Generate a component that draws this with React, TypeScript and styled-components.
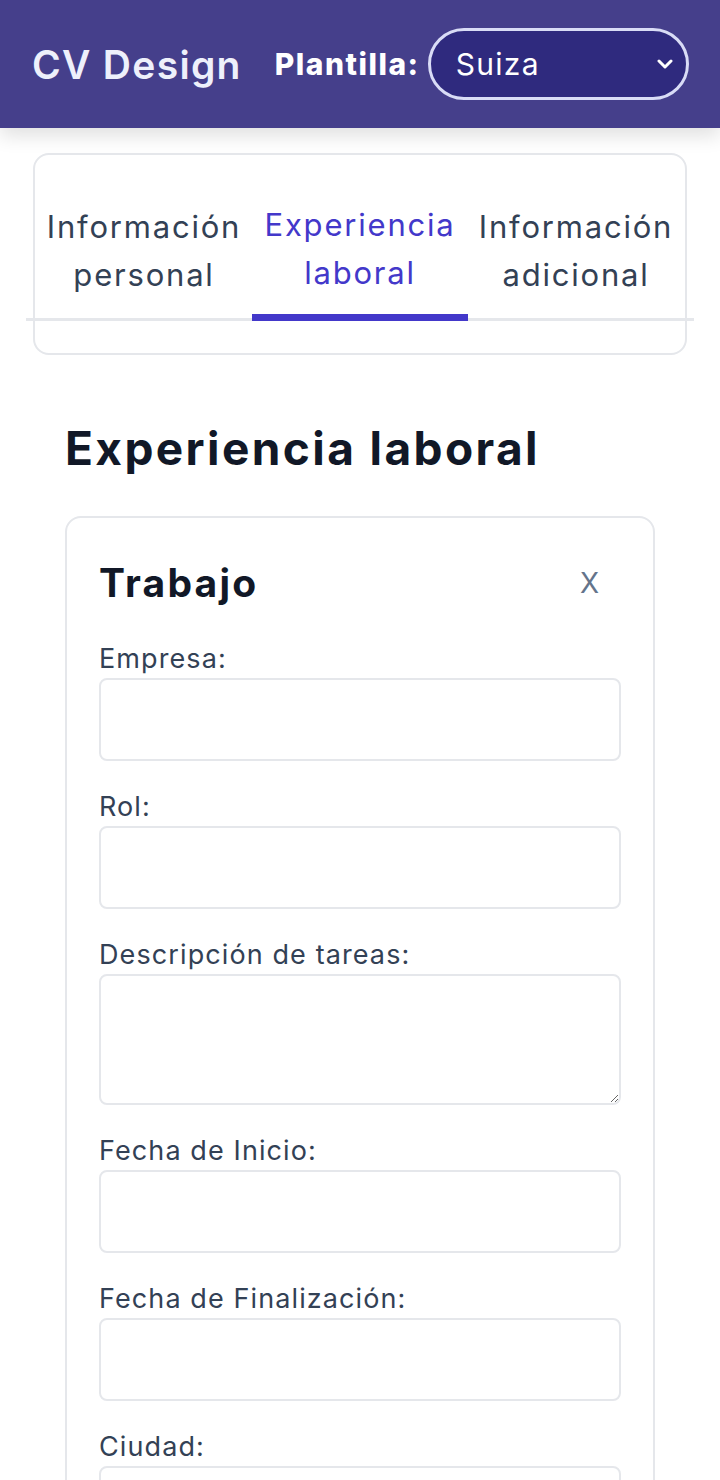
import React from "react";
import styled, { createGlobalStyle } from "styled-components";

const Global = createGlobalStyle`
  html, body { margin: 0; padding: 0; background: #ffffff; }
  body { font-family: Inter, "Open Sans", sans-serif; }
  * { box-sizing: border-box; }
`;

const Header = styled.header`
  height: 128px;
  display: flex;
  align-items: center;
  padding: 0 0 0 32px;
  background: #453f8b;
  box-shadow: 0 8px 18px rgba(0, 0, 0, 0.12);
  position: relative;
  z-index: 1;
  white-space: nowrap;
  & > * { flex-shrink: 0; }
`;

const Logo = styled.div`
  font-size: 39px;
  font-weight: 600;
  color: #eef0fb;
  letter-spacing: 1.3px;
`;

const TemplateLabel = styled.label`
  margin-left: 33px;
  font-size: 30px;
  font-weight: 800;
  color: #ffffff;
  letter-spacing: 1.5px;
`;

const SelectWrap = styled.div`
  position: relative;
  margin-left: 8px;
  width: 261px;
  height: 72px;
`;

const Select = styled.select`
  appearance: none;
  width: 100%;
  height: 100%;
  border: 3px solid #d9dcf6;
  border-radius: 36px;
  background: #2f2a7e;
  color: #ffffff;
  font-family: inherit;
  font-size: 30px;
  letter-spacing: 1.3px;
  padding: 0 0 0 25px;
  outline: none;
`;

const Chevron = styled.svg`
  position: absolute;
  right: 16px;
  top: 50%;
  transform: translateY(-50%);
  pointer-events: none;
`;

const TabCard = styled.div`
  margin: 25px 33px 0;
  border: 2px solid #e5e7eb;
  border-radius: 16px;
  padding: 32px 0;
`;

const TabList = styled.div`
  margin: 0 -9px;
  padding: 0 10px;
  display: grid;
  grid-template-columns: repeat(3, 1fr);
  border-bottom: 3px solid #e5e7eb;
`;

const Tab = styled.button<{ $active?: boolean }>`
  appearance: none;
  background: none;
  border: none;
  margin-bottom: -3px;
  border-bottom: 7px solid ${(p) => (p.$active ? "#4338ca" : "transparent")};
  padding: ${(p) => (p.$active ? "14px 0 17px" : "16px 0 15px")};
  font-family: inherit;
  font-size: 31px;
  letter-spacing: 1.8px;
  line-height: 48px;
  color: ${(p) => (p.$active ? "#4338ca" : "#334155")};
  text-align: center;
  white-space: nowrap;
`;

const Main = styled.main`
  padding: 0 65px;
`;

const Heading = styled.h1`
  margin: 60px 0 0;
  font-size: 46px;
  line-height: 66px;
  font-weight: 700;
  letter-spacing: 2.4px;
  color: #111827;
`;

const JobCard = styled.section`
  margin-top: 35px;
  border: 2px solid #e5e7eb;
  border-radius: 16px;
  padding: 32px 32px 40px;
`;

const JobHeader = styled.div`
  display: flex;
  align-items: center;
  justify-content: space-between;
  margin-bottom: 23px;
`;

const JobTitle = styled.h2`
  margin: 0;
  font-size: 39px;
  line-height: 66px;
  font-weight: 700;
  letter-spacing: 2.2px;
  color: #111827;
`;

const CloseButton = styled.button`
  appearance: none;
  background: none;
  border: none;
  padding: 0;
  margin-right: 22px;
  font-family: inherit;
  font-size: 28px;
  color: #64748b;
`;

const Field = styled.div`
  display: flex;
  flex-direction: column;
  margin-bottom: 26px;
`;

const Label = styled.label`
  font-size: 27px;
  line-height: 39px;
  letter-spacing: 1.1px;
  color: #334155;
`;

const Input = styled.input`
  height: 83px;
  border: 2px solid #e5e7eb;
  border-radius: 8px;
  font-family: inherit;
  font-size: 26px;
  padding: 0 16px;
  outline: none;
`;

const TextArea = styled.textarea`
  height: 131px;
  border: 2px solid #e5e7eb;
  border-radius: 8px;
  font-family: inherit;
  font-size: 26px;
  padding: 12px 16px;
  outline: none;
`;

const fields = [
  { label: "Empresa:", area: false },
  { label: "Rol:", area: false },
  { label: "Descripción de tareas:", area: true },
  { label: "Fecha de Inicio:", area: false },
  { label: "Fecha de Finalización:", area: false },
  { label: "Ciudad:", area: false },
];

export default function App() {
  return (
    <>
      <Global />
      <Header>
        <Logo>CV Design</Logo>
        <TemplateLabel htmlFor="tpl">Plantilla:</TemplateLabel>
        <SelectWrap>
          <Select id="tpl" defaultValue="Suiza">
            <option>Suiza</option>
            <option>Moderna</option>
          </Select>
          <Chevron width="16" height="10" viewBox="0 0 16 10">
            <path d="M2 2 L8 8 L14 2" fill="none" stroke="#ffffff" strokeWidth="3" strokeLinecap="round" strokeLinejoin="round" />
          </Chevron>
        </SelectWrap>
      </Header>
      <TabCard>
        <TabList>
          <Tab>Información<br />personal</Tab>
          <Tab $active>Experiencia<br />laboral</Tab>
          <Tab>Información<br />adicional</Tab>
        </TabList>
      </TabCard>
      <Main>
        <Heading>Experiencia laboral</Heading>
        <JobCard>
          <JobHeader>
            <JobTitle>Trabajo</JobTitle>
            <CloseButton>X</CloseButton>
          </JobHeader>
          {fields.map((f) => (
            <Field key={f.label}>
              <Label>{f.label}</Label>
              {f.area ? <TextArea /> : <Input />}
            </Field>
          ))}
        </JobCard>
      </Main>
    </>
  );
}
